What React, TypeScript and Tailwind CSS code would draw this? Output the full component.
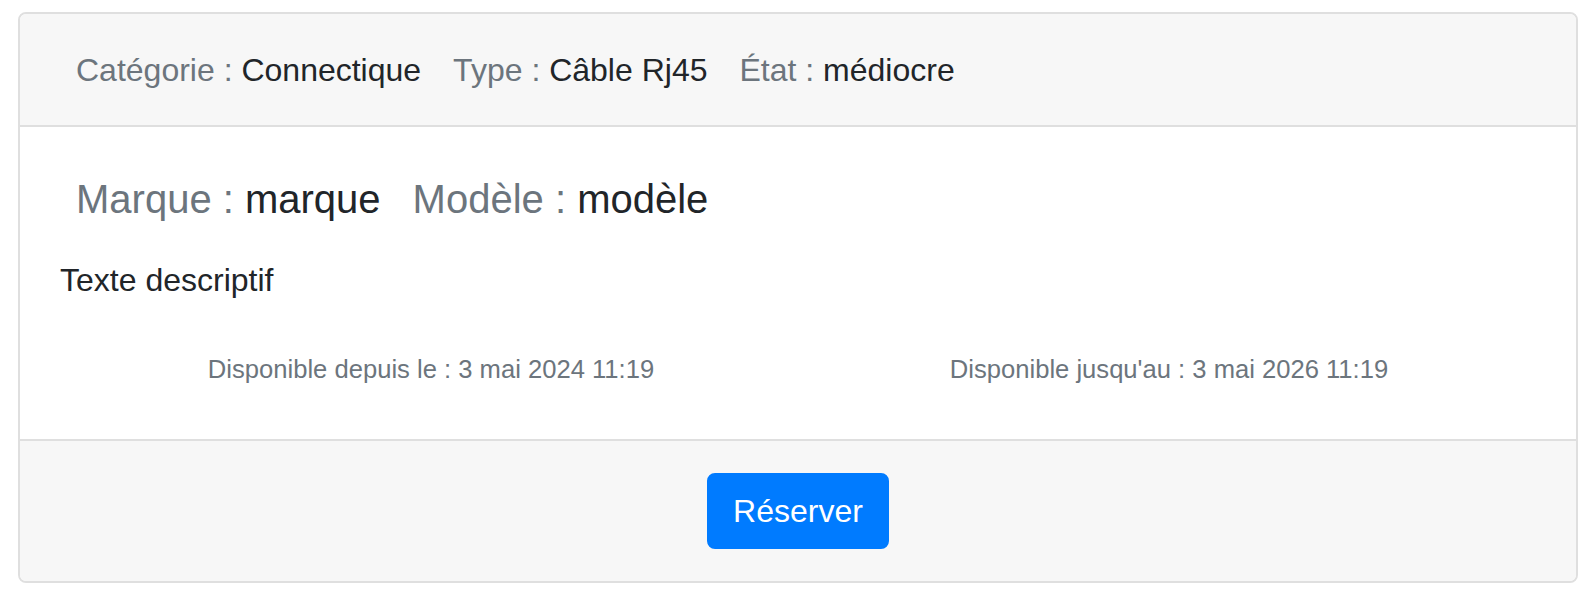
export default function App() {
  return (
    <div className="min-h-[603px] bg-white pt-[12px] font-['Liberation_Sans',Arial,sans-serif] text-[#212529]">
      <div className="ml-[18px] w-[1560px] overflow-hidden rounded-[8px] border-2 border-[#dfdfdf] bg-white">
        {/* header */}
        <div className="border-b-2 border-[#dfdfdf] bg-[#f7f7f7] pl-[56px] pt-[32px] pb-[31px]">
          <div className="flex gap-[32px] text-[32px] leading-[48px]">
            <span>
              <span className="text-[#6c757d]">Catégorie : </span>Connectique
            </span>
            <span>
              <span className="text-[#6c757d]">Type : </span>Câble Rj45
            </span>
            <span>
              <span className="text-[#6c757d]">État : </span>médiocre
            </span>
          </div>
        </div>

        {/* body */}
        <div className="pl-[42px] pr-[38px] pt-[48px] pb-[51px]">
          <div className="ml-[14px] flex gap-[32px] text-[40px] leading-[48px]">
            <span>
              <span className="text-[#6c757d]">Marque : </span>marque
            </span>
            <span>
              <span className="text-[#6c757d]">Modèle : </span>modèle
            </span>
          </div>
          <p className="-ml-[2px] mt-[33px] text-[32px] leading-[48px]">Texte descriptif</p>
          <div className="mt-[46px] grid grid-cols-2 text-[25.6px] leading-[38.4px] text-[#6c757d]">
            <div className="text-center">Disponible depuis le : 3 mai 2024 11:19</div>
            <div className="text-center">Disponible jusqu'au : 3 mai 2026 11:19</div>
          </div>
        </div>

        {/* footer */}
        <div className="flex justify-center border-t-2 border-[#dfdfdf] bg-[#f7f7f7] pt-[32px] pb-[32px]">
          <button className="h-[76px] rounded-[8px] border-2 border-[#007bff] bg-[#007bff] px-[24px] text-[32px] leading-[48px] text-white">
            Réserver
          </button>
        </div>
      </div>
    </div>
  );
}
